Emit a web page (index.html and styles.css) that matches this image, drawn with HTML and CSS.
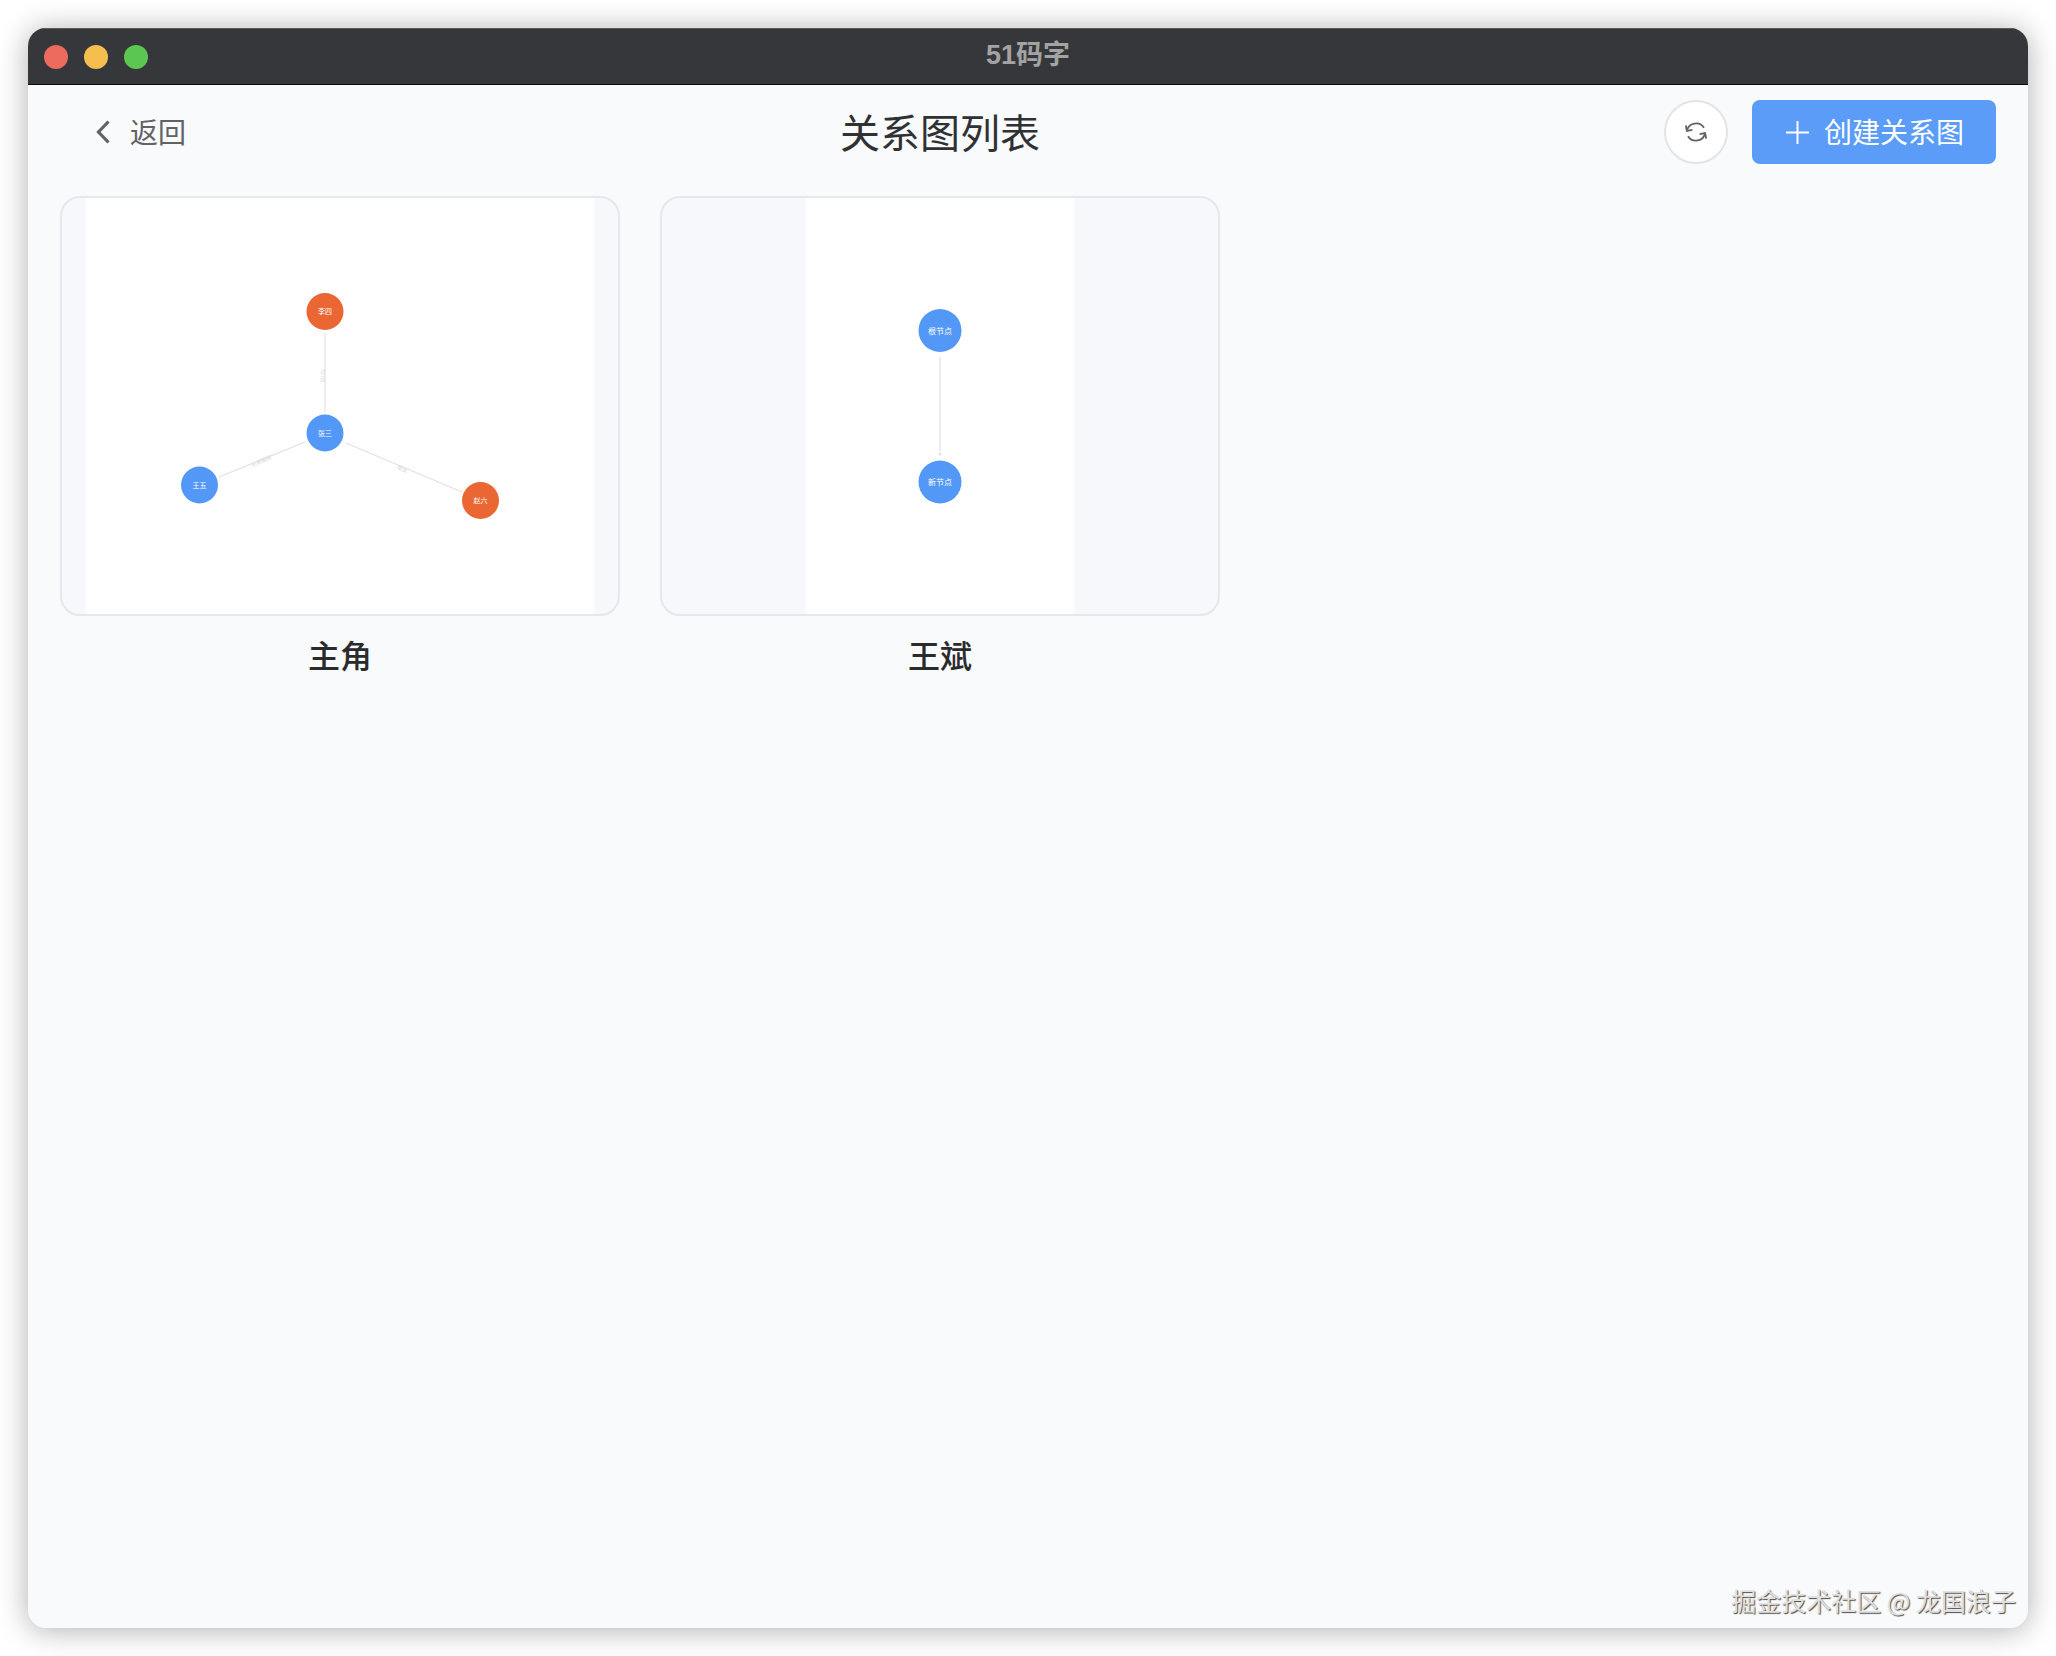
FILE: index.html
```html
<!DOCTYPE html>
<html lang="zh-CN">
<head>
<meta charset="utf-8">
<title>51码字</title>
<link rel="stylesheet" href="styles.css">
</head>
<body>
<div class="window">
  <div class="titlebar">
    <div class="lights">
      <span class="light light-red"></span>
      <span class="light light-yellow"></span>
      <span class="light light-green"></span>
    </div>
    <div class="app-name">51码字</div>
  </div>
  <main class="content">
    <header class="page-head">
      <a class="back">
        <svg class="back-icon" viewBox="0 0 14 24"><path d="M12.500 1.500 L2.500 12 L12.500 22.500"/></svg>
        <span class="back-label">返回</span>
      </a>
      <h1 class="page-title">关系图列表</h1>
      <div class="actions">
        <button class="refresh">
          <svg class="refresh-icon" viewBox="0 0 24 24">
            <path d="M2.800 11 A9.400 9.400 0 0 1 20 7.800"/>
            <path d="M1.800 5.400 L2.900 11 L8.400 9.900"/>
            <path d="M21.200 13 A9.400 9.400 0 0 1 4 16.200"/>
            <path d="M22.200 18.600 L21.100 13 L15.600 14.100"/>
          </svg>
        </button>
        <button class="create">
          <svg class="plus-icon" viewBox="0 0 23 23"><path d="M11.500 0 V23 M0 11.500 H23"/></svg>
          <span class="create-label">创建关系图</span>
        </button>
      </div>
    </header>
    <section class="grid">
      <article class="item">
        <div class="thumb">
          <svg class="graph graph-wide" viewBox="0 0 508 416">
            <g class="edge">
              <line x1="239" y1="135" x2="239" y2="214"/>
              <line x1="133" y1="279" x2="219" y2="244"/>
              <line x1="260" y1="245" x2="376" y2="294"/>
            </g>
            <g class="edge-label">
              <text x="234" y="176">对</text>
              <text x="234" y="183">应</text>
              <text transform="translate(176 265) rotate(-24)" text-anchor="middle">兄弟姐妹</text>
              <text transform="translate(315.500 273) rotate(24)" text-anchor="middle">朋友</text>
            </g>
            <circle class="node-orange" cx="239" cy="113.500" r="18.500"/>
            <circle class="node-blue" cx="239" cy="235" r="18.500"/>
            <circle class="node-blue" cx="113.500" cy="287" r="18.500"/>
            <circle class="node-orange" cx="394.500" cy="302.500" r="18.500"/>
            <text class="node-text" x="239" y="116">李四</text>
            <text class="node-text" x="239" y="237.500">张三</text>
            <text class="node-text" x="113.500" y="289.500">王五</text>
            <text class="node-text" x="394.500" y="305">赵六</text>
          </svg>
        </div>
        <h2 class="item-name">主角</h2>
      </article>
      <article class="item">
        <div class="thumb">
          <svg class="graph graph-narrow" viewBox="0 0 268 416">
            <g class="edge edge-soft">
              <line x1="134" y1="159" x2="134" y2="253"/>
            </g>
            <path class="arrow" d="M134 258 L132.500 255 H135.500 Z"/>
            <circle class="node-blue" cx="134" cy="132.500" r="21.500"/>
            <circle class="node-blue" cx="134" cy="284" r="21.500"/>
            <text class="node-text node-text-lg" x="134" y="135.500">根节点</text>
            <text class="node-text node-text-lg" x="134" y="287">新节点</text>
          </svg>
        </div>
        <h2 class="item-name">王斌</h2>
      </article>
    </section>
  </main>
  <div class="watermark">掘金技术社区 @ 龙国浪子</div>
</div>
</body>
</html>
```
FILE: styles.css
```css
* {
  box-sizing: border-box;
}

html,
body {
  margin: 0;
  padding: 0;
  background: #fff;
}

body {
  width: 2056px;
  height: 1656px;
  padding: 28px;
  font-family: "Noto Sans CJK SC", "Liberation Sans", sans-serif;
}

.window {
  position: relative;
  width: 2000px;
  height: 1600px;
  display: flex;
  flex-direction: column;
  background: #f8fafc;
  border-radius: 18px;
  overflow: hidden;
  box-shadow: 0 2px 30px rgba(0, 0, 0, 0.32);
}

.titlebar {
  height: 57px;
  flex: none;
  display: grid;
  grid-template-columns: 1fr auto 1fr;
  align-items: center;
  padding: 0 16px;
  background: #36373a;
  border-top: 1px solid #5b5b5d;
  border-bottom: 1px solid #0d0d0d;
}

.lights {
  display: flex;
  gap: 16px;
}

.light {
  width: 24px;
  height: 24px;
  border-radius: 50%;
}

.light-red {
  background: #ec6a5e;
}

.light-yellow {
  background: #f5bf4f;
}

.light-green {
  background: #5cc750;
}

.app-name {
  padding-bottom: 3px;
  font-family: "Liberation Sans", "Noto Sans CJK SC", sans-serif;
  font-size: 27px;
  font-weight: 700;
  line-height: 1;
  color: #a3a3a4;
}

.content {
  flex: 1;
  padding: 15px 32px 0;
  display: flex;
  flex-direction: column;
  gap: 32px;
}

.page-head {
  height: 64px;
  display: flex;
  align-items: center;
  justify-content: space-between;
}

.back {
  display: flex;
  align-items: center;
  gap: 20px;
  padding: 0 30px 0 36px;
  font-size: 28px;
  line-height: 1;
  color: #606266;
}

.back-label {
  padding-bottom: 3px;
}

.back-icon {
  width: 14px;
  height: 24px;
  fill: none;
  stroke: #606266;
  stroke-width: 3.2;
}

.page-title {
  margin: 0;
  padding-bottom: 3px;
  font-size: 40px;
  font-weight: 400;
  line-height: 1;
  color: #303133;
}

.actions {
  display: flex;
  align-items: center;
  gap: 24px;
}

.refresh {
  width: 64px;
  height: 64px;
  padding: 0;
  display: flex;
  align-items: center;
  justify-content: center;
  background: #fff;
  border: 2px solid #e2e4e8;
  border-radius: 50%;
}

.refresh-icon {
  width: 24px;
  height: 24px;
  fill: none;
  stroke: #606266;
  stroke-width: 1.8;
}

.create {
  width: 244px;
  height: 64px;
  padding: 0 0 0 34px;
  display: flex;
  align-items: center;
  gap: 15px;
  font-family: inherit;
  font-size: 28px;
  line-height: 1;
  color: #fff;
  background: #5a9cf8;
  border: 0;
  border-radius: 8px;
}

.create-label {
  padding-bottom: 2px;
}

.plus-icon {
  width: 23px;
  height: 23px;
  fill: none;
  stroke: #fff;
  stroke-width: 2;
}

.grid {
  display: flex;
  gap: 40px;
}

.item {
  width: 560px;
}

.thumb {
  height: 420px;
  display: flex;
  justify-content: center;
  background: #f6f8fc;
  border: 2px solid #e4e7ed;
  border-radius: 20px;
  overflow: hidden;
}

.graph {
  display: block;
  height: 416px;
  background: #fff;
}

.graph-wide {
  width: 508px;
}

.graph-narrow {
  width: 268px;
}

.edge line {
  stroke: #e2e2e2;
  stroke-width: 1.2;
}

.edge-soft line {
  stroke: #e8e8e8;
  stroke-width: 1.6;
}

.edge-label text {
  font-size: 5.500px;
  fill: #d8d8d8;
}

.arrow {
  fill: #d8d8d8;
}

.node-blue {
  fill: #5398f7;
}

.node-orange {
  fill: #ea6632;
}

.node-text {
  font-size: 7px;
  fill: #fff;
  text-anchor: middle;
}

.node-text-lg {
  font-size: 8px;
}

.item-name {
  margin: 20px 0 0;
  font-size: 32px;
  font-weight: 500;
  line-height: 36px;
  text-align: center;
  color: #2b2b2d;
}

.watermark {
  position: absolute;
  right: 12px;
  bottom: 13px;
  font-size: 25px;
  line-height: 1.2;
  white-space: nowrap;
  color: #e0e0e0;
  text-shadow: 1px 1px 1px #4a4a4a;
}
```
